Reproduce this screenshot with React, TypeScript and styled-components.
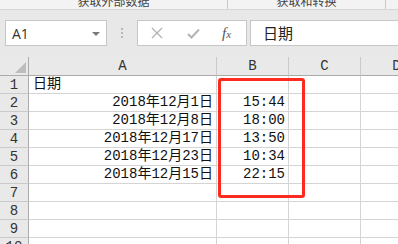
import React from 'react';
import styled, { createGlobalStyle } from 'styled-components';

const GlobalStyle = createGlobalStyle`
    html, body {
        margin: 0;
        padding: 0;
        background: #ffffff;
    }
    body {
        width: 398px;
        height: 244px;
        overflow: hidden;
    }
`;

const columns = ['A', 'B', 'C', 'D'];

const rows: { date?: string; time?: string; label?: string }[] = [
    { label: '日期' },
    { date: '2018年12月1日', time: '15:44' },
    { date: '2018年12月8日', time: '18:00' },
    { date: '2018年12月17日', time: '13:50' },
    { date: '2018年12月23日', time: '10:34' },
    { date: '2018年12月15日', time: '22:15' },
    {},
    {},
    {},
    {},
];

export default function App() {
    return (
        <>
            <GlobalStyle />
            <Screen>
                <RibbonStrip>
                    <RibbonGroup $width={228}>
                        <RibbonLabel>获取外部数据</RibbonLabel>
                    </RibbonGroup>
                    <RibbonGroup $width={158}>
                        <RibbonLabel>获取和转换</RibbonLabel>
                    </RibbonGroup>
                </RibbonStrip>

                <FormulaBar>
                    <NameBox>
                        <NameText>A1</NameText>
                        <DropArrow />
                    </NameBox>
                    <Grip>
                        <Dot />
                        <Dot />
                        <Dot />
                    </Grip>
                    <FuncBox>
                        <IconSlot>
                            <svg width="12" height="12" viewBox="0 0 12 12">
                                <path
                                    d="M1 1 L11 11 M11 1 L1 11"
                                    stroke="#b4b4b4"
                                    strokeWidth="1.4"
                                    fill="none"
                                />
                            </svg>
                        </IconSlot>
                        <IconSlot>
                            <svg width="13" height="11" viewBox="0 0 13 11">
                                <path
                                    d="M1 6 L4.5 9.5 L12 1.5"
                                    stroke="#b4b4b4"
                                    strokeWidth="2"
                                    fill="none"
                                />
                            </svg>
                        </IconSlot>
                        <FxMark>
                            f<small>x</small>
                        </FxMark>
                    </FuncBox>
                    <FormulaInput>日期</FormulaInput>
                </FormulaBar>

                <Sheet>
                    <Corner>
                        <svg width="11" height="11" viewBox="0 0 11 11">
                            <path d="M11 0 L11 11 L0 11 Z" fill="#bdbdbd" />
                        </svg>
                    </Corner>
                    {columns.map((c) => (
                        <ColHeader key={c}>{c}</ColHeader>
                    ))}
                    {rows.map((row, i) => (
                        <React.Fragment key={i}>
                            <RowHeader>{i + 1}</RowHeader>
                            <Cell $align={row.label ? 'left' : 'right'}>
                                {row.label ?? row.date}
                            </Cell>
                            <Cell $align="right">{row.time}</Cell>
                            <Cell />
                            <Cell />
                        </React.Fragment>
                    ))}
                    <Highlight />
                </Sheet>
            </Screen>
        </>
    );
}

const Screen = styled.div`
    width: 398px;
    height: 244px;
    overflow: hidden;
    display: flex;
    flex-direction: column;
    font-family: 'Liberation Mono', 'Noto Sans CJK SC', monospace;
`;

const RibbonStrip = styled.div`
    height: 9px;
    flex: none;
    display: flex;
    overflow: hidden;
    background: #f3f3f3;
    border-bottom: 1px solid #d6d6d6;
`;

const RibbonGroup = styled.div<{ $width: number }>`
    width: ${(p) => p.$width}px;
    flex: none;
    display: flex;
    justify-content: center;
    border-right: 1px solid #c9c9c9;
    box-sizing: border-box;
`;

const RibbonLabel = styled.span`
    margin-top: -5px;
    font-family: 'Noto Sans CJK SC', sans-serif;
    font-size: 12px;
    line-height: 12px;
    color: #444444;
`;

const FormulaBar = styled.div`
    height: 47px;
    flex: none;
    display: flex;
    align-items: flex-start;
    padding-top: 10px;
    box-sizing: border-box;
    background: #e8e8e8;
`;

const NameBox = styled.div`
    margin-left: 5px;
    width: 102px;
    height: 26px;
    box-sizing: border-box;
    border: 1px solid #c6c6c6;
    background: #ffffff;
    display: flex;
    align-items: center;
    justify-content: space-between;
    padding: 0 6px 0 6px;
`;

const NameText = styled.span`
    font-family: 'Open Sans', 'Noto Sans', sans-serif;
    font-size: 14px;
    color: #333333;
`;

const DropArrow = styled.span`
    width: 0;
    height: 0;
    border-left: 4px solid transparent;
    border-right: 4px solid transparent;
    border-top: 4px solid #7a7a7a;
    margin-top: 1px;
`;

const Grip = styled.div`
    width: 30px;
    height: 26px;
    display: flex;
    flex-direction: column;
    align-items: center;
    justify-content: center;
    gap: 2px;
`;

const Dot = styled.span`
    width: 2px;
    height: 2px;
    background: #b8b8b8;
`;

const FuncBox = styled.div`
    width: 110px;
    height: 26px;
    box-sizing: border-box;
    border: 1px solid #c6c6c6;
    background: #ffffff;
    display: flex;
    align-items: center;
    padding-left: 13px;
`;

const IconSlot = styled.span`
    width: 36px;
    display: flex;
    align-items: center;
`;

const FxMark = styled.span`
    font-family: 'Liberation Serif', serif;
    font-style: italic;
    font-size: 15px;
    color: #555555;
    margin-left: -1px;

    small {
        font-size: 11px;
    }
`;

const FormulaInput = styled.div`
    flex: 1;
    margin-left: 3px;
    height: 26px;
    box-sizing: border-box;
    border: 1px solid #c6c6c6;
    border-right: none;
    background: #ffffff;
    padding-left: 12px;
    font-family: 'Noto Sans CJK SC', sans-serif;
    font-size: 15px;
    line-height: 24px;
    color: #222222;
`;

const Sheet = styled.div`
    position: relative;
    flex: none;
    display: grid;
    grid-template-columns: 29px 188px 72px 72px 72px;
    grid-template-rows: 19px;
    grid-auto-rows: 18px;
    background: #ffffff;
`;

const Corner = styled.div`
    background: #e9e9e9;
    border-right: 1px solid #ababab;
    border-bottom: 1px solid #ababab;
    display: flex;
    align-items: flex-end;
    justify-content: flex-end;
    padding: 0 2px 2px 0;
`;

const ColHeader = styled.div`
    background: #e9e9e9;
    border-right: 1px solid #cacaca;
    border-bottom: 1px solid #ababab;
    display: flex;
    align-items: center;
    justify-content: center;
    font-size: 14px;
    color: #333333;
`;

const RowHeader = styled.div`
    background: #e9e9e9;
    border-right: 1px solid #ababab;
    border-bottom: 1px solid #cacaca;
    display: flex;
    align-items: center;
    justify-content: center;
    font-size: 14px;
    color: #333333;
`;

const Cell = styled.div<{ $align?: 'left' | 'right' }>`
    border-right: 1px solid #d4d4d4;
    border-bottom: 1px solid #d4d4d4;
    display: flex;
    align-items: center;
    justify-content: ${(p) => (p.$align === 'left' ? 'flex-start' : 'flex-end')};
    padding: 0 3px 0 4px;
    font-size: 14px;
    line-height: 17px;
    color: #111111;
    white-space: nowrap;
    overflow: hidden;
`;

const Highlight = styled.div`
    position: absolute;
    left: 218px;
    top: 21px;
    width: 87px;
    height: 120px;
    box-sizing: border-box;
    border: 3px solid #fd2a1f;
    border-radius: 3px;
    pointer-events: none;
`;
